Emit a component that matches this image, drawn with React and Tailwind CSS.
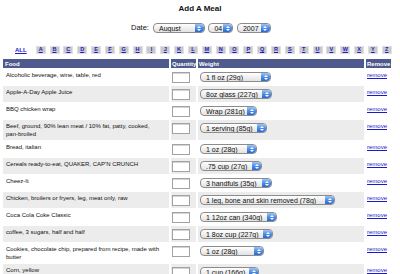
import React from 'react';

const rows = [
  { food: 'Alcoholic beverage, wine, table, red', weight: '1 fl oz (29g)', w: 71 },
  { food: 'Apple-A-Day Apple Juice', weight: '8oz glass (227g)', w: 72 },
  { food: 'BBQ chicken wrap', weight: 'Wrap (281g)', w: 57 },
  { food: 'Beef, ground, 90% lean meat / 10% fat, patty, cooked,', tail: 'pan-broiled', weight: '1 serving (85g)', w: 67 },
  { food: 'Bread, italian', weight: '1 oz (28g)', w: 57 },
  { food: "Cereals ready-to-eat, QUAKER, CAP'N CRUNCH", weight: '.75 cup (27g)', w: 62 },
  { food: 'Cheez-It', weight: '3 handfuls (35g)', w: 72 },
  { food: 'Chicken, broilers or fryers, leg, meat only, raw', weight: '1 leg, bone and skin removed (78g)', w: 135 },
  { food: 'Coca Cola Coke Classic', weight: '1 12oz can (340g)', w: 77 },
  { food: 'coffee, 3 sugars, half and half', weight: '1 8oz cup (227g)', w: 73 },
  { food: 'Cookies, chocolate chip, prepared from recipe, made with', tail: 'butter', weight: '1 oz (28g)', w: 64 },
  { food: 'Corn, yellow', weight: '1 cup (166g)', w: 59 },
];

const letters = 'ABCDEFGHIJKLMNOPQRSTUVWXYZ'.split('');

// mac style popup button
function PopUp({ label, width }) {
  return (
    <div
      className="flex h-[10px] items-center overflow-hidden rounded-[4px] border border-[#8c8c8c] bg-gradient-to-b from-white to-[#e2e2e2]"
      style={{ width }}
    >
      <span className="flex-1 truncate pl-[5px] text-[7px] leading-none text-[#111]">{label}</span>
      <span className="flex h-full w-[9px] flex-col items-center justify-center gap-[1px] rounded-r-[3px] bg-gradient-to-b from-[#9cc4f4] via-[#4f8ee6] to-[#2c68cf]">
        <span className="h-0 w-0 border-x-[2px] border-b-[2px] border-x-transparent border-b-white" />
        <span className="h-0 w-0 border-x-[2px] border-t-[2px] border-x-transparent border-t-white" />
      </span>
    </div>
  );
}

export default function App() {
  return (
    <div className="h-[274px] w-[400px] overflow-hidden bg-white font-['Liberation_Sans',Arial,sans-serif] text-[#111]">
      <h1 className="pt-[4px] text-center text-[8px] font-bold leading-[9px]">Add A Meal</h1>

      <div className="mt-[10px] flex items-center justify-center gap-[3.5px] pl-[2px]">
        <span className="mr-[0.5px] text-[7.5px] leading-none">Date:</span>
        <PopUp label="August" width={52} />
        <PopUp label="04" width={25} />
        <PopUp label="2007" width={34} />
      </div>

      <div className="mt-[13px] flex h-[8px] items-center pl-[15px]">
        <a href="#" className="mr-[9px] text-[6px] font-bold leading-none text-[#1a1acc] underline">ALL</a>
        <div className="flex gap-[3.85px]">
          {letters.map((l) => (
            <a
              key={l}
              href="#"
              className="flex h-[8px] w-[10px] items-center justify-center border border-[#e0e0e0] bg-[#c9c9c9] text-[5.5px] font-bold leading-none text-[#1a1acc] underline"
            >
              {l}
            </a>
          ))}
        </div>
      </div>

      <table className="ml-[1px] mt-[4px] w-[392px] table-fixed border-separate border-spacing-x-[2px] border-spacing-y-[1px] text-[6px]">
        <colgroup>
          <col className="w-[166px]" />
          <col className="w-[25px]" />
          <col className="w-[166px]" />
          <col className="w-[25px]" />
        </colgroup>
        <thead>
          <tr className="h-[9px] bg-[#4d5a8b] text-left font-bold leading-none text-white">
            <th className="pl-[2px]">Food</th>
            <th className="pl-[1px]">Quantity</th>
            <th className="pl-[1px]">Weight</th>
            <th className="pl-[1px]">Remove</th>
          </tr>
        </thead>
        <tbody>
          {rows.map((r, i) => (
            <tr key={r.food} className="align-top">
              <td className={`pb-[2px] pl-[3px] pt-[3px] leading-[7.5px] ${i % 2 ? 'bg-[#ececec]' : 'bg-white'}`}>
                <span className="whitespace-nowrap">{r.food}</span>
                {r.tail && (
                  <>
                    <br />
                    {r.tail}
                  </>
                )}
              </td>
              <td className={`pb-[2px] pl-[1px] pt-[3px] ${i % 2 ? 'bg-[#ececec]' : 'bg-white'}`}>
                <input
                  type="text"
                  readOnly
                  className="block h-[11px] w-[18px] border border-[#a2a2a2] bg-white shadow-[inset_0_1px_0_#d4d4d4]"
                />
              </td>
              <td className={`pl-[2px] pt-[3px] ${i % 2 ? 'bg-[#ececec]' : 'bg-white'}`}>
                <PopUp label={r.weight} width={r.w} />
              </td>
              <td className="bg-white pl-[1px] pt-[3px] leading-[7px]">
                <a href="#" className="text-[6px] text-[#1a1acc] underline">remove</a>
              </td>
            </tr>
          ))}
        </tbody>
      </table>
    </div>
  );
}
